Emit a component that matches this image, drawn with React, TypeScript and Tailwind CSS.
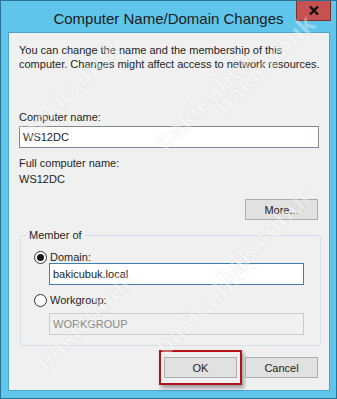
import React from 'react';

const font = { fontFamily: '"Liberation Sans", Arial, sans-serif' };

const Watermark = ({ className }: { className: string }) => (
  <div
    className={`absolute pointer-events-none select-none text-[26px] font-bold text-white/35 -rotate-45 [-webkit-text-stroke:1px_rgba(180,180,180,0.15)] ${className}`}
  >
    bakicubuk
  </div>
);

const Radio = ({ checked }: { checked?: boolean }) => (
  <span className="w-[13px] h-[13px] rounded-full border border-[#333] bg-white flex items-center justify-center shrink-0">
    {checked && <span className="w-[7px] h-[7px] rounded-full bg-[#1a1a1a]" />}
  </span>
);

const btn = 'w-[73px] h-[21px] bg-[#e1e1e1] border border-[#adadad] flex items-center justify-center';

export default function App() {
  return (
    <div
      className="w-[337px] h-[399px] bg-[#5fc5ea] border border-[#2a7294] flex flex-col overflow-hidden relative"
      style={font}
    >
      {/* title bar */}
      <div className="grid grid-cols-[1fr_auto_1fr] h-[31px] shrink-0">
        <div />
        <div className="text-[15px] text-[#1b1b1b] leading-none pt-[10px]">Computer Name/Domain Changes</div>
        <div className="flex justify-end pr-[5px]">
          <div className="w-[35px] h-[21px] -mt-px bg-[#c75050] border border-[#7b2e2e] border-t-0 flex items-center justify-center">
            <svg width="10" height="9" viewBox="0 0 10 9">
              <path d="M1 0.5 L9 8.5 M9 0.5 L1 8.5" stroke="#111" strokeWidth="2.4" />
            </svg>
          </div>
        </div>
      </div>

      {/* client area */}
      <div className="mx-[7px] mr-[6px] mb-[7px] flex-1 bg-[#f0f0f0] border border-[#4aa6c9] flex flex-col text-[11px] text-[#1e1e1e] leading-[14px] pl-[10px]">
        <p className="mt-[10px] whitespace-nowrap">
          You can change the name and the membership of this
          <br />
          computer. Changes might affect access to network resources.
        </p>

        <div className="mt-[39px]">Computer name:</div>
        <div className="mt-[2px] w-[300px] h-[22px] bg-white border border-[#828790] flex items-center pl-[3px]">
          WS12DC
        </div>

        <div className="mt-[8px]">Full computer name:</div>
        <div className="mt-[2px]">WS12DC</div>

        <div className="flex justify-end pr-[11px] mt-[13px]">
          <div className={btn}>More...</div>
        </div>

        {/* Member of group */}
        <div className="mt-[15px] ml-[1px] w-[301px] border border-[#d5dfe5] rounded-[3px] flex flex-col pl-[13px] pb-[10px]">
          <div className="-mt-[8px] ml-[-8px] px-[3px] bg-[#f0f0f0] self-start">Member of</div>
          <div className="flex items-center gap-[3px] mt-[8px]">
            <Radio checked />
            <span>Domain:</span>
          </div>
          <div className="-mt-[1px] ml-[15px] w-[255px] h-[22px] bg-white border border-[#3c7fb1] flex items-center pl-[3px]">
            bakicubuk.local
          </div>
          <div className="flex items-center gap-[3px] mt-[8px]">
            <Radio />
            <span>Workgroup:</span>
          </div>
          <div className="mt-[6px] ml-[15px] w-[255px] h-[22px] bg-[#f0f0f0] border border-[#cccccc] flex items-center pl-[3px] text-[#8a8a8a]">
            WORKGROUP
          </div>
        </div>

        <div className="flex justify-end items-center mt-[4px] pr-[11px] gap-[3px]">
          <div className="px-[3px] py-[5px] border-2 border-[#b3121b] shadow-[2px_3px_4px_rgba(0,0,0,0.35)]">
            <div className={btn}>OK</div>
          </div>
          <div className={btn}>Cancel</div>
        </div>
      </div>

      <Watermark className="left-[5px] top-[70px]" />
      <Watermark className="left-[140px] top-[80px]" />
      <Watermark className="left-[200px] top-[45px]" />
      <Watermark className="left-[20px] top-[300px]" />
      <Watermark className="left-[140px] top-[285px]" />
      <Watermark className="left-[200px] top-[215px]" />
    </div>
  );
}
